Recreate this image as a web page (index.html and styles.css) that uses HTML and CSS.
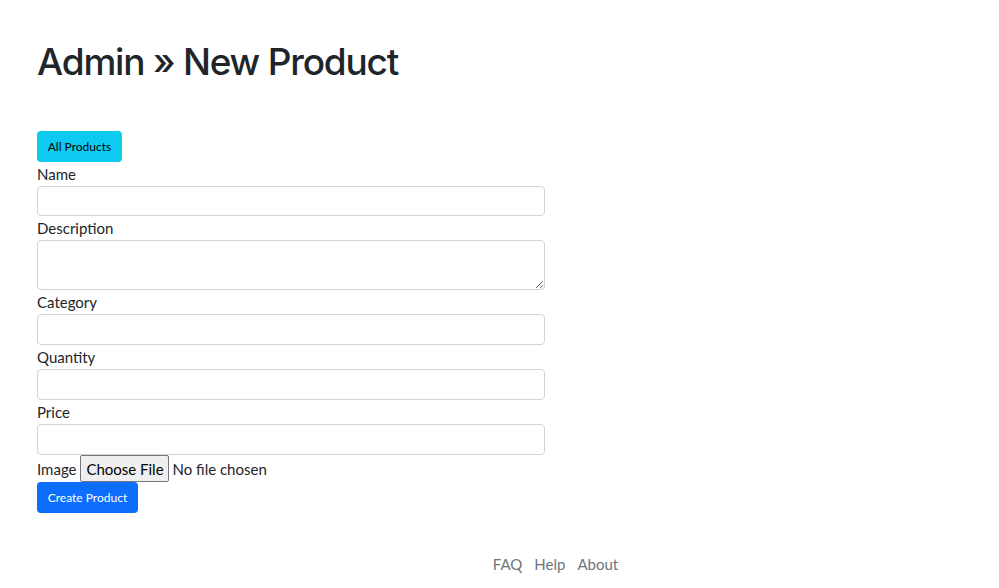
FILE: index.html
```html
<!DOCTYPE html>
<html>
<head>
<meta charset="utf-8">
<link rel="stylesheet" href="styles.css">
</head>
<body>
<main class="container">
  <h1 class="title">Admin » New Product</h1>
  <div class="toolbar">
    <a class="btn btn-info" href="#">All Products</a>
  </div>
  <form class="form">
    <label class="label">Name</label>
    <input class="field" type="text">
    <label class="label">Description</label>
    <textarea class="field area"></textarea>
    <label class="label">Category</label>
    <input class="field tall" type="text">
    <label class="label">Quantity</label>
    <input class="field tall" type="text">
    <label class="label">Price</label>
    <input class="field tall" type="text">
    <div class="image-row">
      <span class="label-inline">Image</span>
      <span class="file-btn">Choose File</span>
      <span class="file-text">No file chosen</span>
    </div>
    <button class="btn btn-primary" type="button">Create Product</button>
  </form>
</main>
<footer class="footer">
  <a href="#">FAQ</a>
  <a href="#">Help</a>
  <a href="#">About</a>
</footer>
</body>
</html>
```
FILE: styles.css
```css
* { box-sizing: border-box; }
body {
  margin: 0;
  font-family: Lato, "Liberation Sans", sans-serif;
  font-size: 15px;
  line-height: 24px;
  color: #212529;
  background: #fff;
}
.container {
  display: flex;
  flex-direction: column;
  padding: 0 37px;
}
.title {
  margin: 0;
  padding-top: 38px;
  height: 131px;
  font-family: Inter, sans-serif;
  font-weight: 500;
  font-size: 37px;
  letter-spacing: -1.2px;
  line-height: 48px;
  color: #212529;
}
.toolbar {
  display: flex;
}
.btn {
  display: inline-flex;
  align-items: center;
  justify-content: center;
  height: 31px;
  padding: 0;
  border: none;
  border-radius: 4px;
  font-family: Lato, sans-serif;
  font-size: 12px;
  white-space: nowrap;
  text-decoration: none;
}
.btn-info {
  width: 85px;
  background: #0dcaf0;
  color: #000;
}
.btn-primary {
  width: 101px;
  background: #0d6efd;
  color: #fff;
}
.form {
  display: flex;
  flex-direction: column;
  align-items: flex-start;
  width: 508px;
}
.label {
  display: block;
  height: 24px;
  line-height: 24px;
}
.field {
  width: 508px;
  height: 30px;
  border: 1px solid #ced4da;
  border-radius: 4px;
  background: #fff;
  font: inherit;
}
.field.tall { height: 31px; }
.area { height: 50px; resize: vertical; }
.image-row {
  display: flex;
  align-items: center;
  height: 27px;
}
.label-inline { margin-right: 4px; }
.file-btn {
  height: 27px;
  width: 89px;
  display: inline-flex;
  align-items: center;
  justify-content: center;
  background: #efefef;
  border: 1px solid #767676;
  border-radius: 2px;
  color: #000;
}
.file-text { margin-left: 3px; }
.footer {
  display: flex;
  justify-content: center;
  gap: 12px;
  padding: 39px 0 0 112px;
  font-size: 15px;
}
.footer a {
  color: #6c757d;
  text-decoration: none;
}
```
